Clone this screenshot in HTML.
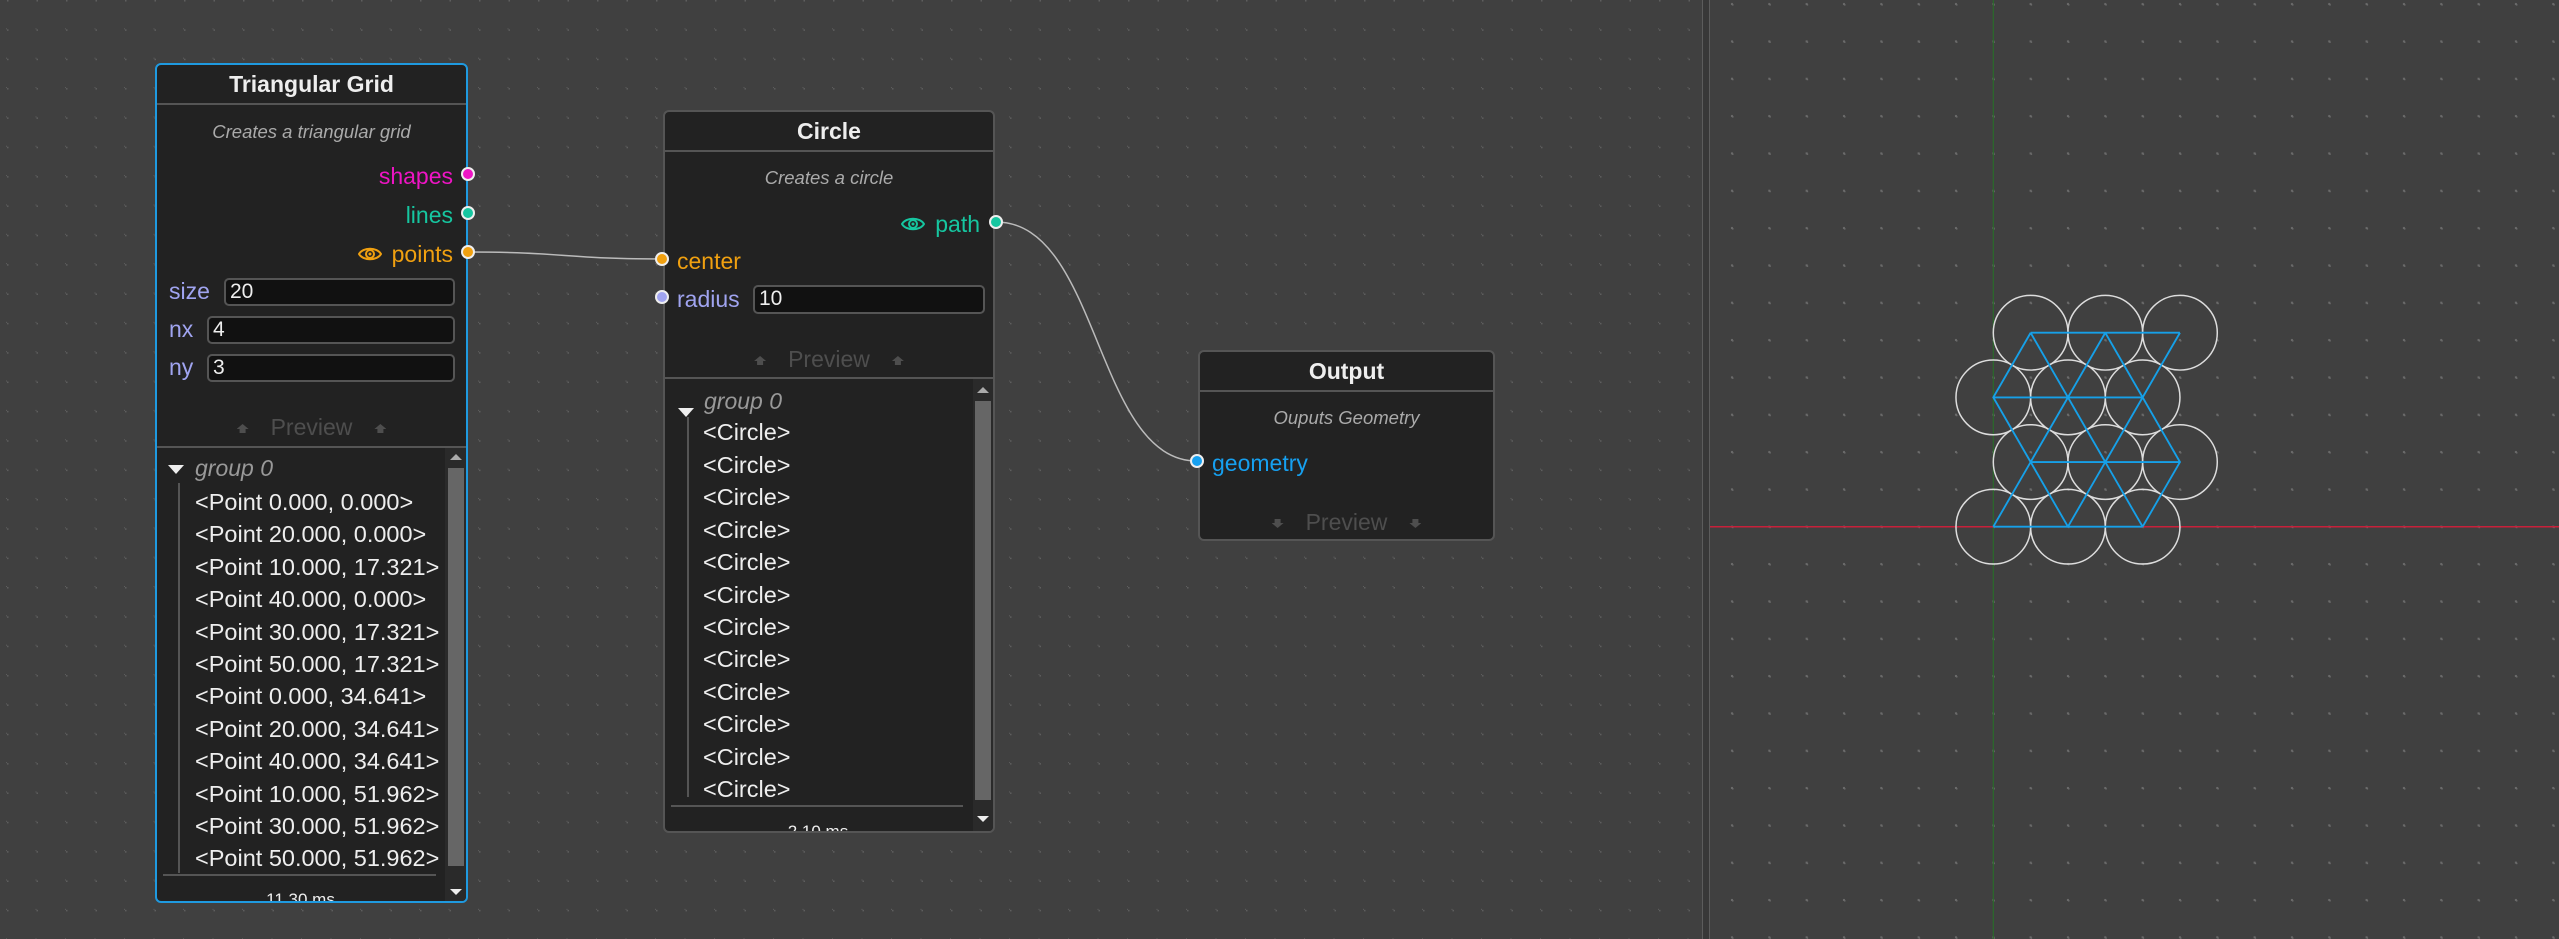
<!DOCTYPE html>
<html><head><meta charset="utf-8"><style>
*{box-sizing:border-box;margin:0;padding:0}
body{width:2559px;height:939px;overflow:hidden;background:#404040;font-family:"Liberation Sans",sans-serif;position:relative}
.node{position:absolute;background:#222;border:2px solid #555;border-radius:6px;overflow:hidden}
.node.sel{border-color:#1f9ae0}
.title{position:absolute;left:0;right:0;text-align:center;color:#eee;font-weight:bold;font-size:23px}
.hline{position:absolute;left:0;right:0;height:2px;background:#555}
.desc{position:absolute;left:0;right:0;text-align:center;color:#aaa;font-style:italic;font-size:18.5px}
.lab{position:absolute;font-size:23px;line-height:26px;white-space:nowrap;display:flex;align-items:center}
.lab svg{margin-right:10px}
.inp{position:absolute;background:#111;border:2px solid #555;border-radius:5px;color:#eee;font-size:21px;padding-left:4px;line-height:23px}
.prev{position:absolute;left:0;right:0;text-align:center;color:#4e4e4e;font-size:23px}
.prev i{display:inline-block;width:12px;height:9px;background:#4e4e4e;clip-path:polygon(50% 0,100% 55%,75% 55%,75% 100%,25% 100%,25% 55%,0 55%);margin:0 22px;vertical-align:2px}
.prev i.d{clip-path:polygon(25% 0,75% 0,75% 45%,100% 45%,50% 100%,0 45%,25% 45%)}
.row{position:absolute;color:#eee;font-size:23.5px;white-space:nowrap;line-height:26px}
.grp{position:absolute;color:#999;font-style:italic;font-size:23px;line-height:26px}
.sb{position:absolute;background:#2a2a2a}
.thumb{position:absolute;background:#666}
.ms{position:absolute;left:0;right:0;text-align:center;color:#eee;font-size:17px}
.sock{position:absolute;width:14px;height:14px;border-radius:50%;border:2px solid #eee}
</style></head><body>
<svg width="2559" height="939" style="position:absolute;left:0;top:0">
<defs>
<pattern id="g1" x="7" y="0" width="29.5" height="29.35" patternUnits="userSpaceOnUse"><rect x="-1" y="-1" width="2.5" height="2.5" fill="#5e5e5e"/><rect x="28.5" y="28.35" width="2" height="2" fill="#5e5e5e"/></pattern>
<pattern id="g2" x="1993.3" y="526.7" width="37.33" height="37.33" patternUnits="userSpaceOnUse"><rect x="-1" y="-1" width="2.5" height="2.5" fill="#6a6a6a"/><rect x="36.3" y="36.3" width="2" height="2" fill="#6a6a6a"/><rect x="36.3" y="-1" width="2" height="2" fill="#6a6a6a"/><rect x="-1" y="36.3" width="2" height="2" fill="#6a6a6a"/></pattern>
</defs>
<rect x="0" y="0" width="1702" height="939" fill="url(#g1)"/>
<rect x="1702" y="0" width="1" height="939" fill="#5c5c5c"/>
<rect x="1703" y="0" width="6" height="939" fill="#383838"/>
<rect x="1709" y="0" width="1" height="939" fill="#5c5c5c"/>
<rect x="1710" y="0" width="849" height="939" fill="url(#g2)"/>
<line x1="1993.3" y1="0" x2="1993.3" y2="939" stroke="#2a6a2a" stroke-width="1.2"/>
<line x1="1710" y1="526.7" x2="2559" y2="526.7" stroke="#c8203a" stroke-width="1.5"/>
<g transform="translate(1993.3,526.7) scale(3.733,-3.733)" fill="none">
<g stroke="#ddd" stroke-width="0.4">
<circle cx="0" cy="0" r="10"/><circle cx="20" cy="0" r="10"/><circle cx="40" cy="0" r="10"/>
<circle cx="10" cy="17.32" r="10"/><circle cx="30" cy="17.32" r="10"/><circle cx="50" cy="17.32" r="10"/>
<circle cx="0" cy="34.64" r="10"/><circle cx="20" cy="34.64" r="10"/><circle cx="40" cy="34.64" r="10"/>
<circle cx="10" cy="51.96" r="10"/><circle cx="30" cy="51.96" r="10"/><circle cx="50" cy="51.96" r="10"/>
</g>
<g stroke="#16a0e8" stroke-width="0.5">
<path d="M0 0H40M10 17.32H50M0 34.64H40M10 51.96H50"/>
<path d="M0 0L10 17.32L0 34.64L10 51.96M20 0L10 17.32L20 34.64L10 51.96M20 0L30 17.32L20 34.64L30 51.96M40 0L30 17.32L40 34.64L30 51.96M40 0L50 17.32L40 34.64L50 51.96"/>
</g>
</g>
<path d="M468 252 C 565 252, 565 259, 662 259" stroke="#bbb" stroke-width="1.5" fill="none"/>
<path d="M996 222 C 1100 222, 1095 461, 1197 461" stroke="#bbb" stroke-width="1.5" fill="none"/>
</svg>

<!-- Triangular Grid -->
<div class="node sel" style="left:155px;top:63px;width:313px;height:840px">
<div class="title" style="top:6px">Triangular Grid</div>
<div class="hline" style="top:38px"></div>
<div class="desc" style="top:56px">Creates a triangular grid</div>
<div class="lab" style="right:13px;top:98px;color:#ee14c4">shapes</div>
<div class="lab" style="right:13px;top:137px;color:#16c6a0">lines</div>
<div class="lab" style="right:13px;top:176px;color:#f0a010"><svg width="24" height="16" viewBox="0 0 24 16"><path d="M1 8C5 1 19 1 23 8C19 15 5 15 1 8Z" fill="none" stroke="#f0a010" stroke-width="2"/><circle cx="12" cy="8" r="4" fill="none" stroke="#f0a010" stroke-width="2"/><circle cx="12" cy="8" r="1.5" fill="#f0a010"/></svg>points</div>
<div class="lab" style="left:12px;top:213px;color:#a0a4f0">size</div>
<div class="inp" style="left:67px;top:213px;width:231px;height:28px">20</div>
<div class="lab" style="left:12px;top:251px;color:#a0a4f0">nx</div>
<div class="inp" style="left:50px;top:251px;width:248px;height:28px">4</div>
<div class="lab" style="left:12px;top:289px;color:#a0a4f0">ny</div>
<div class="inp" style="left:50px;top:289px;width:248px;height:28px">3</div>
<div class="prev" style="top:349px"><i></i>Preview<i></i></div>
<div class="hline" style="top:381px"></div>
<div style="position:absolute;left:11px;top:400px;width:0;height:0;border-left:8px solid transparent;border-right:8px solid transparent;border-top:9px solid #eee"></div>
<div class="grp" style="left:38px;top:390px">group 0</div>
<div style="position:absolute;left:21px;top:418px;width:2px;height:390px;background:#555"></div>
<div class="row" style="left:38px;top:424px">&lt;Point 0.000, 0.000&gt;</div>
<div class="row" style="left:38px;top:456px">&lt;Point 20.000, 0.000&gt;</div>
<div class="row" style="left:38px;top:489px">&lt;Point 10.000, 17.321&gt;</div>
<div class="row" style="left:38px;top:521px">&lt;Point 40.000, 0.000&gt;</div>
<div class="row" style="left:38px;top:554px">&lt;Point 30.000, 17.321&gt;</div>
<div class="row" style="left:38px;top:586px">&lt;Point 50.000, 17.321&gt;</div>
<div class="row" style="left:38px;top:618px">&lt;Point 0.000, 34.641&gt;</div>
<div class="row" style="left:38px;top:651px">&lt;Point 20.000, 34.641&gt;</div>
<div class="row" style="left:38px;top:683px">&lt;Point 40.000, 34.641&gt;</div>
<div class="row" style="left:38px;top:716px">&lt;Point 10.000, 51.962&gt;</div>
<div class="row" style="left:38px;top:748px">&lt;Point 30.000, 51.962&gt;</div>
<div class="row" style="left:38px;top:780px">&lt;Point 50.000, 51.962&gt;</div>
<div class="hline" style="top:809px;left:6px;right:30px"></div>
<div class="ms" style="top:825px;right:22px">11.30 ms</div>
<div class="sb" style="left:288px;top:383px;width:23px;height:460px"></div>
<div class="thumb" style="left:291px;top:403px;width:16px;height:398px"></div>
<div style="position:absolute;left:293px;top:389px;border-left:6px solid transparent;border-right:6px solid transparent;border-bottom:6px solid #aaa"></div>
<div style="position:absolute;left:293px;top:824px;border-left:6px solid transparent;border-right:6px solid transparent;border-top:6px solid #eee"></div>
</div>
<div class="sock" style="left:461px;top:167px;background:#ee14c4"></div>
<div class="sock" style="left:461px;top:206px;background:#16c6a0"></div>
<div class="sock" style="left:461px;top:245px;background:#f0a010"></div>

<!-- Circle -->
<div class="node" style="left:663px;top:110px;width:332px;height:723px">
<div class="title" style="top:6px">Circle</div>
<div class="hline" style="top:38px"></div>
<div class="desc" style="top:55px">Creates a circle</div>
<div class="lab" style="right:13px;top:99px;color:#16c6a0"><svg width="24" height="16" viewBox="0 0 24 16"><path d="M1 8C5 1 19 1 23 8C19 15 5 15 1 8Z" fill="none" stroke="#16c6a0" stroke-width="2"/><circle cx="12" cy="8" r="4" fill="none" stroke="#16c6a0" stroke-width="2"/><circle cx="12" cy="8" r="1.5" fill="#16c6a0"/></svg>path</div>
<div class="lab" style="left:12px;top:136px;color:#f0a010">center</div>
<div class="lab" style="left:12px;top:174px;color:#a0a4f0">radius</div>
<div class="inp" style="left:88px;top:173px;width:232px;height:29px">10</div>
<div class="prev" style="top:234px"><i></i>Preview<i></i></div>
<div class="hline" style="top:265px"></div>
<div style="position:absolute;left:13px;top:296px;width:0;height:0;border-left:8px solid transparent;border-right:8px solid transparent;border-top:9px solid #eee"></div>
<div class="grp" style="left:39px;top:276px">group 0</div>
<div style="position:absolute;left:22px;top:305px;width:2px;height:380px;background:#555"></div>
<div class="row" style="left:38px;top:307px">&lt;Circle&gt;</div>
<div class="row" style="left:38px;top:340px">&lt;Circle&gt;</div>
<div class="row" style="left:38px;top:372px">&lt;Circle&gt;</div>
<div class="row" style="left:38px;top:405px">&lt;Circle&gt;</div>
<div class="row" style="left:38px;top:437px">&lt;Circle&gt;</div>
<div class="row" style="left:38px;top:470px">&lt;Circle&gt;</div>
<div class="row" style="left:38px;top:502px">&lt;Circle&gt;</div>
<div class="row" style="left:38px;top:534px">&lt;Circle&gt;</div>
<div class="row" style="left:38px;top:567px">&lt;Circle&gt;</div>
<div class="row" style="left:38px;top:599px">&lt;Circle&gt;</div>
<div class="row" style="left:38px;top:632px">&lt;Circle&gt;</div>
<div class="row" style="left:38px;top:664px">&lt;Circle&gt;</div>
<div class="hline" style="top:693px;left:6px;right:30px"></div>
<div class="ms" style="top:710px;right:22px">2.10 ms</div>
<div class="sb" style="left:308px;top:267px;width:21px;height:460px"></div>
<div class="thumb" style="left:310px;top:289px;width:16px;height:399px"></div>
<div style="position:absolute;left:312px;top:275px;border-left:6px solid transparent;border-right:6px solid transparent;border-bottom:6px solid #aaa"></div>
<div style="position:absolute;left:312px;top:704px;border-left:6px solid transparent;border-right:6px solid transparent;border-top:6px solid #eee"></div>
</div>
<div class="sock" style="left:989px;top:215px;background:#16c6a0"></div>
<div class="sock" style="left:655px;top:252px;background:#f0a010"></div>
<div class="sock" style="left:655px;top:290px;background:#a0a4f0"></div>

<!-- Output -->
<div class="node" style="left:1198px;top:350px;width:297px;height:191px">
<div class="title" style="top:6px">Output</div>
<div class="hline" style="top:38px"></div>
<div class="desc" style="top:55px">Ouputs Geometry</div>
<div class="lab" style="left:12px;top:98px;color:#16a0f0">geometry</div>
<div class="prev" style="top:157px"><i class="d"></i>Preview<i class="d"></i></div>
</div>
<div class="sock" style="left:1190px;top:454px;background:#16a0f0"></div>
</body></html>
